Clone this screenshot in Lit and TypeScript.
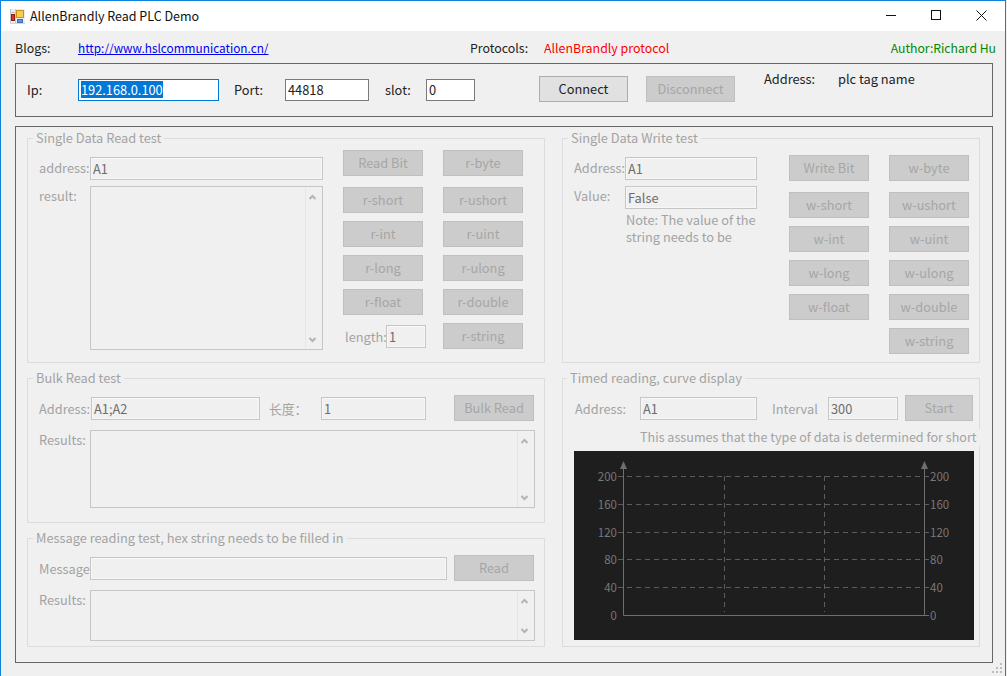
import { LitElement, html, css, svg } from 'lit';
import { customElement } from 'lit/decorators.js';

const readButtons = ['r-short', 'r-ushort', 'r-int', 'r-uint', 'r-long', 'r-ulong', 'r-float', 'r-double'];
const writeButtons = ['w-short', 'w-ushort', 'w-int', 'w-uint', 'w-long', 'w-ulong', 'w-float', 'w-double'];

const chartRows = [
  { y: 25.5, label: '200' },
  { y: 53.5, label: '160' },
  { y: 81.5, label: '120' },
  { y: 108.5, label: '80' },
  { y: 136.5, label: '40' },
];

@customElement('app-root')
export class AppRoot extends LitElement {
  static styles = css`
    :host {
      display: block;
      width: 1007px;
      height: 676px;
      background: #f0f0f0;
      font-family: "Noto Sans CJK SC", "Open Sans", sans-serif;
      font-size: 12.8px;
      color: #222;
      overflow: hidden;
    }
    * { box-sizing: border-box; }

    .window {
      position: relative;
      width: 1006px;
      height: 676px;
      border: 1px solid #0a84e0;
      border-bottom: none;
      background: #f0f0f0;
    }

    .titlebar {
      display: flex;
      align-items: center;
      height: 30px;
      background: #fff;
      padding-left: 9px;
    }
    .titlebar .title { margin: 0 0 2px 5px; color: #111; font-size: 12.5px; }
    .titlebar .controls { margin-left: auto; display: flex; }
    .titlebar .controls svg { display: block; }

    .info {
      display: flex;
      align-items: center;
      height: 32px;
      padding: 2px 9px 0 14px;
      font-size: 12.4px;
    }
    .info a { color: #00e; text-decoration: underline; font-size: 11.8px; }
    .info .red { color: #f00; }
    .info .green { color: #080; margin-left: auto; font-size: 12.2px; }

    .conn {
      display: flex;
      align-items: flex-start;
      width: 978px;
      height: 54px;
      margin-left: 14px;
      padding: 12px 0 0 11px;
      border: 1px solid #666;
    }
    .conn .lbl { line-height: 21px; margin-top: 3px; }
    .conn .tb { margin-top: 3px; height: 22px; }
    .conn .top { line-height: 16px; margin-top: -5px; white-space: nowrap; }

    .main {
      display: grid;
      grid-template-columns: 518px 418px;
      column-gap: 17px;
      align-content: start;
      width: 978px;
      height: 537px;
      margin: 9px 0 0 14px;
      padding: 3px 0 0 11px;
      border: 1px solid #666;
    }
    .col { display: flex; flex-direction: column; gap: 7px; }

    fieldset {
      margin: 0;
      padding: 0;
      min-width: 0;
      border: 1px solid #dcdcdc;
    }
    legend {
      margin-left: 5px;
      padding: 0 3px;
      height: 17px;
      line-height: 16px;
      color: #a3a3a3;
      white-space: nowrap;
    }
    .timed legend { margin-left: 4px; }
    .single { height: 233px; display: flex; }
    .bulk { height: 153px; }
    .message { height: 117px; }
    .timed { height: 277px; }

    .form {
      display: grid;
      align-content: start;
      margin-left: 11px;
      padding-top: 10px;
      row-gap: 6px;
    }
    .form.read { grid-template-columns: 51px 233px; grid-template-rows: 23px 164px; }
    .form.write { grid-template-columns: 51px 132px; grid-template-rows: 23px 23px; }
    .form span:nth-of-type(2) { margin-top: -1px; }
    .note {
      grid-column: 2;
      margin: -4px 0 0 1px;
      line-height: 17px;
      color: #a3a3a3;
      white-space: nowrap;
    }

    .buttons {
      display: grid;
      grid-template-columns: 80px 80px;
      grid-template-rows: 29px;
      grid-auto-rows: 26px;
      column-gap: 20px;
      row-gap: 8px;
      align-content: start;
      align-items: start;
    }
    .buttons.read { margin-left: 20px; padding-top: 3px; }
    .buttons.write { margin-left: 32px; padding-top: 8px; }
    .length { display: flex; align-items: center; width: 83px; height: 26px; margin-left: 2px; }
    .length .lbl { width: 41px; }
    .length .tb { width: 40px; height: 23px; }

    .lbl { color: #a3a3a3; white-space: nowrap; overflow: hidden; }
    .form .lbl { line-height: 21px; }
    .conn .lbl, .conn .top { color: #222; }

    .tb {
      height: 23px;
      padding: 0 2px;
      line-height: 21px;
      border: 1px solid #c6c6c6;
      box-shadow: inset 0 0 0 1px #f7f7f7;
      background: #f0f0f0;
      color: #6d6d6d;
      white-space: nowrap;
    }
    .tb.on {
      border-color: #7a7a7a;
      box-shadow: none;
      background: #fff;
      color: #222;
      line-height: 20px;
    }
    .tb.focus { border-color: #0078d7; }
    .tb.focus span { background: #0078d7; color: #fff; display: inline-block; line-height: 17px; }

    .area {
      display: flex;
      justify-content: flex-end;
      border: 1px solid #c6c6c6;
      background: #f0f0f0;
    }
    .bar {
      display: flex;
      flex-direction: column;
      justify-content: space-between;
      align-items: center;
      width: 17px;
      padding: 7px 3px 6px 0;
      border-left: 1px solid #e6e6e6;
    }
    .bar svg { display: block; }

    .btn {
      display: flex;
      align-items: center;
      justify-content: center;
      height: 26px;
      border: 1px solid #bfbfbf;
      background: #ccc;
      color: #a6a6a6;
      white-space: nowrap;
      padding-bottom: 2px;
    }
    .btn.on { border-color: #adadad; background: #e1e1e1; color: #222; }

    .row { display: flex; align-items: center; height: 26px; margin: 8px 0 0 11px; }
    .timed .row { margin-left: 12px; }
    .row2 { display: flex; align-items: flex-start; margin: 9px 0 0 11px; }
    .row2 .lbl { line-height: 20px; }
    .area.bulk-area { width: 445px; height: 78px; }
    .area.msg-area { width: 445px; height: 51px; }

    .hint {
      width: 340px;
      height: 17px;
      margin: 8px 0 0 77px;
      line-height: 15px;
      font-size: 12.6px;
      background: #f0f0f0;
      color: #a3a3a3;
      white-space: nowrap;
    }
    .chart { display: block; margin: 5px 0 0 11px; }
    .chart text { font-size: 11.5px; fill: #787878; font-family: "Noto Sans CJK SC", "Open Sans", sans-serif; }

    .grip { position: absolute; right: 2px; bottom: 2px; display: block; }

    .w41 { width: 41px; } .w49 { width: 49px; } .w51 { width: 51px; } .w52 { width: 52px; }
    .w56 { width: 56px; } .w65 { width: 65px; } .w63 { width: 63px; } .w68 { width: 68px; }
    .w70 { width: 70px; } .w74 { width: 74px; } .w80 { width: 80px; } .w84 { width: 84px; }
    .w89 { width: 89px; } .w105 { width: 105px; } .w117 { width: 117px; } .w141 { width: 141px; }
    .w169 { width: 169px; } .w357 { width: 357px; } .w392 { width: 392px; }
    .ml7 { margin-left: 7px; } .ml9 { margin-left: 9px; }
    .ml15 { margin-left: 15px; } .ml16 { margin-left: 16px; } .ml18 { margin-left: 18px; }
    .ml28 { margin-left: 28px; } .ml29 { margin-left: 29px; } .ml64 { margin-left: 64px; }
  `;

  private chevron(up: boolean) {
    const d = up ? 'M0.5 5 L3.5 2 L6.5 5' : 'M0.5 1 L3.5 4 L6.5 1';
    return html`<svg width="7" height="6" viewBox="0 0 7 6"><path d=${d} fill="none" stroke="#b4b4b4" stroke-width="2"></path></svg>`;
  }

  private scrollbar() {
    return html`<div class="bar">${this.chevron(true)}${this.chevron(false)}</div>`;
  }

  private appIcon() {
    return html`<svg width="15" height="15" viewBox="0 0 15 15">
      <rect x="0" y="0" width="15" height="15" fill="#eeeeee"></rect>
      <rect x="0" y="3" width="5" height="1" fill="#bdbdbd"></rect>
      <rect x="0" y="0" width="1" height="15" fill="#c8c8c8"></rect>
      <rect x="5" y="0" width="1" height="15" fill="#c8c8c8"></rect>
      <rect x="0" y="14" width="15" height="1" fill="#d4d4d4"></rect>
      <rect x="6.5" y="1.5" width="7" height="7" fill="#f8cd4a" stroke="#c9901f"></rect>
      <rect x="1.5" y="5.5" width="3" height="6" fill="#d8342a" stroke="#8f2018"></rect>
      <rect x="7.5" y="10.5" width="5" height="3" fill="#5c94e6" stroke="#3d6cb8"></rect>
    </svg>`;
  }

  private winControls() {
    return html`<div class="controls">
      <svg width="46" height="30" viewBox="0 0 46 30"><rect x="19" y="14" width="10" height="1" fill="#111"></rect></svg>
      <svg width="46" height="30" viewBox="0 0 46 30"><rect x="18.5" y="9.5" width="9" height="9" fill="none" stroke="#111"></rect></svg>
      <svg width="46" height="30" viewBox="0 0 46 30"><path d="M17.5 9.5 L27.5 19.5 M27.5 9.5 L17.5 19.5" stroke="#111" fill="none"></path></svg>
    </div>`;
  }

  private chart() {
    const dash = '5 4';
    return html`<svg class="chart" width="400" height="189" viewBox="0 0 400 189">
      <rect width="400" height="189" fill="#1e1e1e"></rect>
      ${chartRows.map(
        (r) => svg`
          <line x1="44" x2="355" y1=${r.y} y2=${r.y} stroke="#5c5c5c" stroke-dasharray=${dash}></line>
          <text x="43" y=${r.y + 4} text-anchor="end">${r.label}</text>
          <text x="356" y=${r.y + 4}>${r.label}</text>
        `,
      )}
      <line x1="150.5" x2="150.5" y1="25" y2="161" stroke="#5c5c5c" stroke-dasharray=${dash}></line>
      <line x1="250.5" x2="250.5" y1="25" y2="161" stroke="#5c5c5c" stroke-dasharray=${dash}></line>
      <path d="M49.5 16 V164.5 H355 M350.5 16 V164.5" fill="none" stroke="#6e6e6e"></path>
      <path d="M49.5 10 L53 18 H46 Z M350.5 10 L354 18 H347 Z" fill="#6e6e6e"></path>
      <text x="43" y="168.5" text-anchor="end">0</text>
      <text x="356" y="168.5">0</text>
    </svg>`;
  }

  render() {
    return html`
      <div class="window">
        <div class="titlebar">
          ${this.appIcon()}
          <span class="title">AllenBrandly Read PLC Demo</span>
          ${this.winControls()}
        </div>

        <div class="info">
          <span class="w63">Blogs:</span>
          <span class="w392"><a href="#">http://www.hslcommunication.cn/</a></span>
          <span class="w74">Protocols:</span>
          <span class="red">AllenBrandly protocol</span>
          <span class="green">Author:Richard Hu</span>
        </div>

        <div class="conn">
          <span class="lbl w51">Ip:</span>
          <div class="tb on focus w141"><span>192.168.0.100</span></div>
          <span class="lbl w51 ml15">Port:</span>
          <div class="tb on w84">44818</div>
          <span class="lbl w41 ml16">slot:</span>
          <div class="tb on w49">0</div>
          <div class="btn on w89 ml64">Connect</div>
          <div class="btn w89 ml18">Disconnect</div>
          <span class="top w74 ml29">Address:</span>
          <span class="top">plc tag name</span>
        </div>

        <div class="main">
          <div class="col">
            <fieldset class="single">
              <legend>Single Data Read test</legend>
              <div class="single">
                <div class="form read">
                  <span class="lbl">address:</span>
                  <div class="tb">A1</div>
                  <span class="lbl">result:</span>
                  <div class="area">${this.scrollbar()}</div>
                </div>
                <div class="buttons read">
                  <div class="btn">Read Bit</div>
                  <div class="btn">r-byte</div>
                  ${readButtons.map((b) => html`<div class="btn">${b}</div>`)}
                  <div class="length">
                    <span class="lbl">length:</span>
                    <div class="tb">1</div>
                  </div>
                  <div class="btn">r-string</div>
                </div>
              </div>
            </fieldset>

            <fieldset class="bulk">
              <legend>Bulk Read test</legend>
              <div class="row">
                <span class="lbl w52">Address:</span>
                <div class="tb w169">A1;A2</div>
                <span class="lbl w52 ml9">长度：</span>
                <div class="tb w105">1</div>
                <div class="btn w80 ml28">Bulk Read</div>
              </div>
              <div class="row2">
                <span class="lbl w51">Results:</span>
                <div class="area bulk-area">${this.scrollbar()}</div>
              </div>
            </fieldset>

            <fieldset class="message">
              <legend>Message reading test, hex string needs to be filled in</legend>
              <div class="row">
                <span class="lbl w51">Message</span>
                <div class="tb w357"></div>
                <div class="btn w80 ml7">Read</div>
              </div>
              <div class="row2">
                <span class="lbl w51">Results:</span>
                <div class="area msg-area">${this.scrollbar()}</div>
              </div>
            </fieldset>
          </div>

          <div class="col">
            <fieldset class="single">
              <legend>Single Data Write test</legend>
              <div class="single">
                <div class="form write">
                  <span class="lbl">Address:</span>
                  <div class="tb">A1</div>
                  <span class="lbl">Value:</span>
                  <div class="tb">False</div>
                  <div class="note">Note: The value of the<br />string needs to be</div>
                </div>
                <div class="buttons write">
                  <div class="btn">Write Bit</div>
                  <div class="btn">w-byte</div>
                  ${writeButtons.map((b) => html`<div class="btn">${b}</div>`)}
                  <div></div>
                  <div class="btn">w-string</div>
                </div>
              </div>
            </fieldset>

            <fieldset class="timed">
              <legend>Timed reading, curve display</legend>
              <div class="row">
                <span class="lbl w65">Address:</span>
                <div class="tb w117">A1</div>
                <span class="lbl w56 ml15">Interval</span>
                <div class="tb w70">300</div>
                <div class="btn w68 ml7">Start</div>
              </div>
              <div class="hint">This assumes that the type of data is determined for short</div>
              ${this.chart()}
            </fieldset>
          </div>
        </div>

        <svg class="grip" width="11" height="11" viewBox="0 0 11 11" fill="#bdbdbd">
          <rect x="8" y="0" width="2" height="2"></rect>
          <rect x="4" y="4" width="2" height="2"></rect>
          <rect x="8" y="4" width="2" height="2"></rect>
          <rect x="0" y="8" width="2" height="2"></rect>
          <rect x="4" y="8" width="2" height="2"></rect>
          <rect x="8" y="8" width="2" height="2"></rect>
        </svg>
      </div>
    `;
  }
}
